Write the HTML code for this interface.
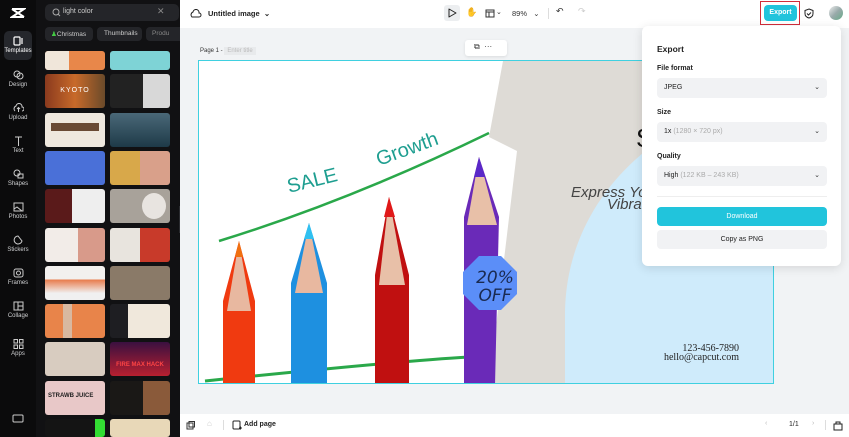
<!DOCTYPE html>
<html><head><meta charset="utf-8"><style>
*{margin:0;padding:0;box-sizing:border-box}
html,body{width:849px;height:437px;overflow:hidden}
body{font-family:"Liberation Sans",sans-serif;background:#f1f3f5;position:relative}
.abs{position:absolute}
.rail{left:0;top:0;width:36px;height:437px;background:#0b0b0c;overflow:hidden}
.panel{left:36px;top:0;width:144px;height:437px;background:#111113;overflow:hidden}
.ri{position:absolute;left:0;width:36px;text-align:center;color:#cfd0d2;font-size:6px}
.ri svg{display:block;margin:0 auto 2px}
.th{position:absolute;width:60px;height:34px;border-radius:3px;overflow:hidden}
.top{left:180px;top:0;width:669px;height:28px;background:#fff}
.bot{left:180px;top:414px;width:669px;height:23px;background:#fff}
.pop{left:642px;top:26px;width:199px;height:240px;background:#fff;border-radius:6px;box-shadow:0 2px 10px rgba(0,0,0,.12)}
.lbl{position:absolute;left:15px;font-size:7px;color:#222;font-weight:bold}
.sel{position:absolute;left:15px;width:170px;height:20px;background:#f1f2f4;border-radius:4px;font-size:7px;color:#222;padding:6px 7px}
.sel span{color:#aaa}
.sel i{position:absolute;right:7px;top:5px;font-style:normal;font-size:7px;color:#333}
</style></head><body>
<div class="abs rail">
 <svg class="abs" style="left:10px;top:7px" width="16" height="12" viewBox="0 0 16 12"><path d="M2 2h12L2 10h12M2 2l12 8" stroke="#fff" stroke-width="2" fill="none"/></svg>
 <div class="abs" style="left:4px;top:31px;width:28px;height:29px;background:#25272c;border-radius:5px"></div>
 <div class="ri" style="top:36px;color:#fff"><svg width="11" height="10"><rect x="1" y="1" width="6" height="8" rx="1" fill="none" stroke="#fff" stroke-width="1.2"/><path d="M9 2v6" stroke="#fff" stroke-width="1.2"/></svg>Templates</div>
 <div class="ri" style="top:70px"><svg width="11" height="10"><circle cx="4" cy="4" r="3" fill="none" stroke="#ccc"/><circle cx="7" cy="6" r="3" fill="none" stroke="#ccc"/></svg>Design</div>
 <div class="ri" style="top:103px"><svg width="11" height="10"><path d="M2 8a3 3 0 0 1 1-5 3 3 0 0 1 6 1 2 2 0 0 1 0 4M5.5 9V5M4 6l1.5-1.5L7 6" fill="none" stroke="#ccc"/></svg>Upload</div>
 <div class="ri" style="top:136px"><svg width="11" height="10"><path d="M2 1h7M5.5 1v9" stroke="#ccc" fill="none"/></svg>Text</div>
 <div class="ri" style="top:169px"><svg width="11" height="10"><circle cx="4" cy="4" r="3" fill="none" stroke="#ccc"/><rect x="5" y="5" width="5" height="4" fill="none" stroke="#ccc"/></svg>Shapes</div>
 <div class="ri" style="top:202px"><svg width="11" height="10"><rect x="1" y="1" width="9" height="8" fill="none" stroke="#ccc"/><path d="M1 7l3-2 5 4" fill="none" stroke="#ccc"/></svg>Photos</div>
 <div class="ri" style="top:235px"><svg width="11" height="10"><path d="M5 1a4 4 0 1 0 4 5L5 1z" fill="none" stroke="#ccc"/></svg>Stickers</div>
 <div class="ri" style="top:268px"><svg width="11" height="10"><rect x="1" y="1" width="9" height="8" rx="2" fill="none" stroke="#ccc"/><circle cx="5.5" cy="5" r="2" fill="none" stroke="#ccc"/></svg>Frames</div>
 <div class="ri" style="top:301px"><svg width="11" height="10"><rect x="1" y="1" width="9" height="8" fill="none" stroke="#ccc"/><path d="M5 1v8M5 5h5" stroke="#ccc"/></svg>Collage</div>
 <div class="ri" style="top:339px"><svg width="11" height="10"><rect x="1" y="0.5" width="3.5" height="3.5" fill="none" stroke="#ccc"/><rect x="6.5" y="0.5" width="3.5" height="3.5" fill="none" stroke="#ccc"/><rect x="1" y="6" width="3.5" height="3.5" fill="none" stroke="#ccc"/><rect x="6.5" y="6" width="3.5" height="3.5" fill="none" stroke="#ccc"/></svg>Apps</div>
 <svg class="abs" style="left:12px;top:414px" width="12" height="10"><rect x="1" y="1" width="10" height="7" rx="1" fill="none" stroke="#ccc"/></svg>
</div>
<div class="abs panel">
 <div class="abs" style="left:9px;top:4px;width:134px;height:17px;background:#242529;border-radius:5px"></div>
 <svg class="abs" style="left:16px;top:8px" width="9" height="9"><circle cx="4" cy="4" r="3" fill="none" stroke="#aaa"/><path d="M6 6l2 2" stroke="#aaa"/></svg>
 <div class="abs" style="left:27px;top:8px;font-size:7px;color:#ccc">light color</div>
 <div class="abs" style="left:121px;top:6px;font-size:9px;color:#888">✕</div>
 <div class="abs" style="left:9px;top:27px;width:48px;height:14px;background:#242529;border-radius:4px;font-size:6.5px;color:#ccc;padding:3px 0 0 6px"><span style="color:#4c4">♟</span>Christmas</div>
 <div class="abs" style="left:61px;top:27px;width:45px;height:14px;background:#242529;border-radius:4px;font-size:6.5px;color:#ccc;padding:3px 0 0 7px">Thumbnails</div>
 <div class="abs" style="left:110px;top:27px;width:34px;height:14px;background:#242529;border-radius:4px 0 0 4px;font-size:6.5px;color:#888;padding:3px 0 0 6px;overflow:hidden;white-space:nowrap">Produ</div>
 <div class="th" style="left:9px;top:51px;height:19px;background:#e8874a"><div style="width:40%;height:100%;background:#f0e6da"></div></div>
 <div class="th" style="left:74px;top:51px;height:19px;background:#7ed3d6"></div>
 <div class="th" style="left:9px;top:74px;background:linear-gradient(90deg,#8a3a1e,#c86a2a,#6a4a2a)"><div style="color:#fff;font-size:7px;text-align:center;margin-top:13px;letter-spacing:1px">KYOTO</div></div>
 <div class="th" style="left:74px;top:74px;background:linear-gradient(90deg,#222 55%,#d8d8d8 55%)"></div>
 <div class="th" style="left:9px;top:113px;background:#efe8de"><div style="margin:10px 6px;height:8px;background:#6a4a34"></div></div>
 <div class="th" style="left:74px;top:113px;background:linear-gradient(#4a6878,#1e3a48)"></div>
 <div class="th" style="left:9px;top:151px;background:#4a70d8"></div>
 <div class="th" style="left:74px;top:151px;background:linear-gradient(90deg,#d8a84a 50%,#d9a08a 50%)"></div>
 <div class="th" style="left:9px;top:189px;background:linear-gradient(90deg,#5a1a1a 45%,#eee 45%)"></div>
 <div class="th" style="left:74px;top:189px;background:#a8a29a"><div style="position:absolute;right:4px;top:4px;width:24px;height:26px;border-radius:50%;background:#e8e4e0"></div></div>
 <div class="th" style="left:9px;top:228px;background:linear-gradient(90deg,#f2ece8 55%,#d89a8a 55%)"></div>
 <div class="th" style="left:74px;top:228px;background:linear-gradient(90deg,#e8e4de 50%,#c83a2a 50%)"></div>
 <div class="th" style="left:9px;top:266px;background:linear-gradient(#f2f0ee 40%,#e87a4a 40%,#f0f0f0 80%)"></div>
 <div class="th" style="left:74px;top:266px;background:#8a7a68"></div>
 <div class="th" style="left:9px;top:304px;background:linear-gradient(90deg,#e8844a,#e8844a 30%,#d8b8a0 30%,#d8b8a0 45%,#e8844a 45%)"></div>
 <div class="th" style="left:74px;top:304px;background:linear-gradient(90deg,#1e1e22 30%,#f0e8dc 30%)"></div>
 <div class="th" style="left:9px;top:342px;background:#d8ccc0"></div>
 <div class="th" style="left:74px;top:342px;background:linear-gradient(#3a1040,#b82030)"><div style="color:#f44;font-size:6px;font-weight:bold;text-align:center;margin-top:20px">FIRE MAX HACK</div></div>
 <div class="th" style="left:9px;top:381px;background:#e8c8c8"><div style="color:#222;font-size:6px;font-weight:bold;margin:12px 3px">STRAWB JUICE</div></div>
 <div class="th" style="left:74px;top:381px;background:linear-gradient(90deg,#1a1816 55%,#8a5a3a 55%)"></div>
 <div class="th" style="left:9px;top:419px;height:18px;background:#141414"><div style="position:absolute;right:0;top:0;width:10px;height:18px;background:#3d3"></div></div>
 <div class="th" style="left:74px;top:419px;height:18px;background:#e8d8b8"></div>
 <div class="abs" style="left:143px;top:206px;width:5px;height:27px;background:#2a2b2f;border-radius:0 3px 3px 0"></div>
</div>
<div class="abs top">
 <svg class="abs" style="left:10px;top:9px" width="12" height="10"><path d="M2 8a3 3 0 0 1 1-5 3 3 0 0 1 6 1 2 2 0 0 1 0 4z" fill="none" stroke="#222"/></svg>
 <div class="abs" style="left:28px;top:9px;font-size:7.5px;color:#222;font-weight:bold">Untitled image &nbsp;⌄</div>
 <div class="abs" style="left:264px;top:5px;width:16px;height:16px;background:#eceef0;border-radius:3px"></div>
 <svg class="abs" style="left:268px;top:8px" width="9" height="10"><path d="M1 1l7 4-7 4z" fill="none" stroke="#222" stroke-linejoin="round"/></svg>
 <div class="abs" style="left:286px;top:7px;font-size:9px;color:#333">✋</div>
 <svg class="abs" style="left:305px;top:9px" width="10" height="9"><rect x="1" y="1" width="8" height="7" fill="none" stroke="#333"/><path d="M1 3h8M4 3v5" stroke="#333"/></svg>
 <div class="abs" style="left:316px;top:8px;font-size:7px;color:#333">⌄</div>
 <div class="abs" style="left:332px;top:9px;font-size:7.5px;color:#333">89% &nbsp;&nbsp;⌄</div>
 <div class="abs" style="left:368px;top:8px;width:1px;height:11px;background:#ddd"></div>
 <div class="abs" style="left:376px;top:6px;font-size:9px;color:#333">↶</div>
 <div class="abs" style="left:398px;top:6px;font-size:9px;color:#ccc">↷</div>
 <div class="abs" style="left:580px;top:1px;width:40px;height:24px;border:1px solid #d22d3a"></div>
 <div class="abs" style="left:584px;top:5px;width:33px;height:16px;background:#21c4dc;border-radius:4px;color:#fff;font-size:7px;font-weight:bold;text-align:center;line-height:16px">Export</div>
 <svg class="abs" style="left:624px;top:8px" width="10" height="11"><path d="M5 1l4 1.5v3c0 2.5-2 4-4 4.5C3 9.5 1 8 1 5.5v-3z M3 5.5l1.5 1.5L7 4.5" fill="none" stroke="#222"/></svg>
 <div class="abs" style="left:649px;top:6px;width:14px;height:14px;border-radius:50%;background:linear-gradient(135deg,#eee,#9aa,#6a8)"></div>
</div>
<div class="abs" style="left:200px;top:48px;font-size:6px;color:#333">Page 1 - <span style="background:#e8eaec;color:#bbb;padding:1px 3px">Enter title</span></div>
<div class="abs" style="left:465px;top:40px;width:42px;height:16px;background:#fff;border-radius:3px;box-shadow:0 1px 3px rgba(0,0,0,.1);font-size:8px;color:#333;padding:2px 0 0 9px">⧉ &nbsp;···</div>
<div class="abs" style="left:198px;top:60px;width:576px;height:324px;border:1.5px solid #3fd0e0;overflow:hidden;background:#fff">
 <svg width="576" height="324" viewBox="0 0 576 324" style="position:absolute;left:0;top:0">
  <path d="M304 0H576V324H290L318 90L290 76Z" fill="#dedbd6"/>
  <path d="M576 28C440 62 368 150 366 250V324H576Z" fill="#cfebfb"/>
  <path d="M20 180Q150 140 290 72" stroke="#2aa84a" stroke-width="2.5" fill="none"/>
  <path d="M6 320Q200 300 270 296" stroke="#2aa84a" stroke-width="3" fill="none"/>
  <text x="90" y="132" font-size="20" fill="#1e9e90" transform="rotate(-14 90 132)" font-family="Liberation Sans">SALE</text>
  <text x="180" y="105" font-size="20" fill="#1e9e90" transform="rotate(-20 180 105)" font-family="Liberation Sans">Growth</text>
  <path d="M24 324V240L40 180L56 240V324Z" fill="#f03a10"/><path d="M28 250L40 180L52 250Z" fill="#e8b8a0"/><path d="M36 196L40 180L44 196Z" fill="#f07010"/>
  <path d="M92 324V222L110 162L128 222V324Z" fill="#1e90e0"/><path d="M96 232L110 162L124 232Z" fill="#e8b8a0"/><path d="M105 178L110 162L115 178Z" fill="#30c0f0"/>
  <path d="M176 324V214L190 136L210 214V324Z" fill="#c01010"/><path d="M180 224L190 136L206 224Z" fill="#e8c0a8"/><path d="M185 156L190 136L196 156Z" fill="#e01818"/>
  <path d="M265 324V156L280 96L300 156L296 324Z" fill="#6a2ab8"/><path d="M268 164L280 96L298 164Z" fill="#e8c0a8"/><path d="M275 116L280 96L286 116Z" fill="#5a28c8"/>
  <path d="M280 195L302 195L318 211L318 233L302 249L280 249L264 233L264 211Z" fill="#5b8ef8"/>
  <text x="296" y="222" font-size="17" fill="#1a2a50" text-anchor="middle" font-style="italic" font-family="DejaVu Sans">20%</text>
  <text x="296" y="240" font-size="17" fill="#1a2a50" text-anchor="middle" font-style="italic" font-family="DejaVu Sans">OFF</text>
  <text x="372" y="136" font-size="15" fill="#444" font-style="italic">Express Yo</text>
  <text x="408" y="148" font-size="15" fill="#444" font-style="italic">Vibra</text>
  <text x="437" y="86" font-size="26" fill="#111">S</text>
  <text x="540" y="290" font-size="10" fill="#222" text-anchor="end" font-family="Liberation Serif">123-456-7890</text>
  <text x="540" y="299" font-size="10" fill="#222" text-anchor="end" font-family="Liberation Serif">hello@capcut.com</text>
 </svg>
</div>
<div class="abs pop">
 <div class="abs" style="left:15px;top:18px;font-size:8.5px;font-weight:bold;color:#222">Export</div>
 <div class="lbl" style="top:39px">File format</div>
 <div class="sel" style="top:52px">JPEG<i>⌄</i></div>
 <div class="lbl" style="top:83px">Size</div>
 <div class="sel" style="top:96px">1x <span>(1280 × 720 px)</span><i>⌄</i></div>
 <div class="lbl" style="top:127px">Quality</div>
 <div class="sel" style="top:140px">High <span>(122 KB – 243 KB)</span><i>⌄</i></div>
 <div class="abs" style="left:15px;top:170px;width:170px;height:1px;background:#eee"></div>
 <div class="abs" style="left:15px;top:181px;width:170px;height:19px;background:#21c4dc;border-radius:4px;color:#fff;font-size:7px;text-align:center;line-height:19px">Download</div>
 <div class="abs" style="left:15px;top:204px;width:170px;height:19px;background:#f1f2f4;border-radius:4px;color:#222;font-size:7px;text-align:center;line-height:19px">Copy as PNG</div>
</div>
<div class="abs bot">
 <svg class="abs" style="left:6px;top:7px" width="9" height="9"><rect x="1" y="2" width="6" height="6" fill="none" stroke="#333"/><rect x="3" y="0.5" width="5.5" height="5.5" fill="none" stroke="#333"/></svg>
 <div class="abs" style="left:27px;top:5px;font-size:8px;color:#ccc">⌂</div>
 <div class="abs" style="left:43px;top:6px;width:1px;height:10px;background:#ddd"></div>
 <svg class="abs" style="left:52px;top:6px" width="10" height="10"><rect x="1" y="1" width="7" height="8" rx="1" fill="none" stroke="#222"/><path d="M7 8h3M8.5 6.5v3" stroke="#222"/></svg>
 <div class="abs" style="left:64px;top:7px;font-size:7px;color:#222;font-weight:bold">Add page</div>
 <div class="abs" style="left:585px;top:6px;font-size:7px;color:#bbb">‹</div>
 <div class="abs" style="left:609px;top:7px;font-size:7px;color:#222">1/1</div>
 <div class="abs" style="left:632px;top:6px;font-size:7px;color:#bbb">›</div>
 <div class="abs" style="left:645px;top:6px;width:1px;height:10px;background:#ddd"></div>
 <svg class="abs" style="left:653px;top:6px" width="10" height="11"><rect x="1" y="4" width="8" height="6" fill="none" stroke="#222"/><path d="M3 4V2h4v2" fill="none" stroke="#222"/></svg>
</div>
</body></html>
